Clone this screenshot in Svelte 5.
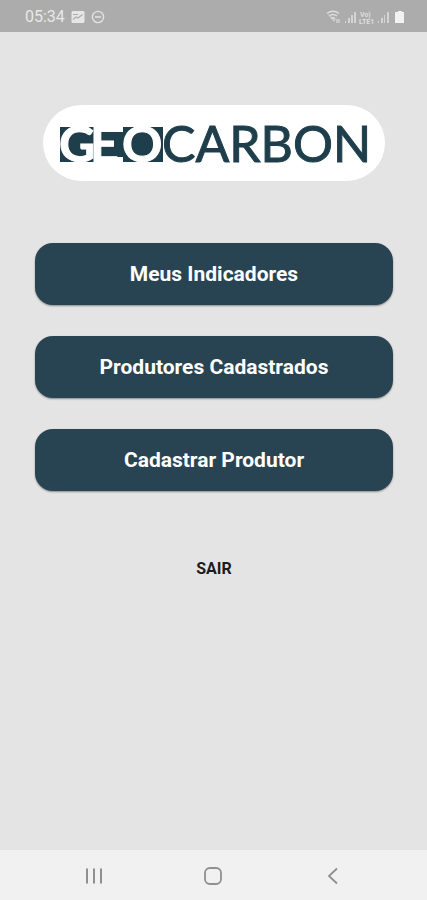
<script lang="ts">
	let time = '05:34';

	const actions = ['Meus Indicadores', 'Produtores Cadastrados', 'Cadastrar Produtor'];
</script>

<div class="screen">
	<header class="statusbar">
		<div class="status">
			<span class="time">{time}</span>
			<svg width="14" height="14" viewBox="0 0 14 14" aria-hidden="true">
				<rect x="0.5" y="1" width="13" height="12" rx="1.5" fill="#e6e6e6" />
				<path d="M2 9.5 L5 7 L7 8 L11.5 4.5" fill="none" stroke="#acacac" stroke-width="1.2" />
				<path d="M2 4.5h5" stroke="#acacac" stroke-width="1" />
			</svg>
			<svg width="14" height="14" viewBox="0 0 14 14" aria-hidden="true">
				<circle cx="7" cy="7" r="5.6" fill="none" stroke="#e2e2e2" stroke-width="1.4" />
				<path d="M4 7h6" stroke="#e2e2e2" stroke-width="1.6" />
			</svg>
		</div>
		<svg width="78" height="16" viewBox="0 0 78 16" aria-hidden="true">
			<g fill="none" stroke="#dedede" stroke-width="1.5">
				<path d="M1 4.5 Q7 0 13 4.5" />
				<path d="M3 7 Q7 4 11 7" />
				<path d="M5 9.5 Q7 8 9 9.5" />
			</g>
			<path d="M1 4 L8 13 L10 10 L7 9z" fill="#dedede" opacity="0.6" />
			<path d="M11 10v4M13 10v4" stroke="#e2e2e2" />
			<g fill="#d4d4d4">
				<rect x="19" y="12" width="1" height="2" />
				<rect x="22" y="9" width="2" height="5" />
				<rect x="25" y="6" width="2" height="8" />
				<rect x="28" y="3" width="2" height="11" />
				<rect x="52" y="12" width="1" height="2" />
				<rect x="55" y="9" width="2" height="5" />
				<rect x="58" y="6" width="1" height="8" />
				<rect x="61" y="3" width="2" height="11" />
			</g>
			<text x="34" y="8" class="volte">Vo)</text>
			<text x="33" y="15" class="volte">LTE1</text>
			<path d="M70 3h2V2h4v1h2v11h-9V3z" fill="#f2f2f2" />
		</svg>
	</header>

	<main>
		<div class="logo">
			<svg viewBox="0 0 342 76" role="img" aria-label="GeoCarbon">
				<g fill="#1f3e4b">
					<rect x="17" y="22" width="34" height="35" />
					<rect x="57" y="27" width="25" height="25" />
					<rect x="80" y="22" width="40" height="35" />
				</g>
				<text class="light" x="16 47 79" y="57">GEO</text>
				<text class="dark" x="119" y="57">CARBON</text>
			</svg>
		</div>

		<div class="actions">
			{#each actions as action}
				<button type="button" class="btn">{action}</button>
			{/each}
		</div>

		<button type="button" class="exit">SAIR</button>
	</main>

	<nav class="navbar">
		<button type="button" aria-label="Recentes">
			<svg width="20" height="20" viewBox="0 0 20 20">
				<path d="M3 2.5v15M10 2.5v15M17 2.5v15" stroke="#8f8f8f" stroke-width="2" />
			</svg>
		</button>
		<button type="button" aria-label="Início">
			<svg width="20" height="20" viewBox="0 0 20 20">
				<rect x="2" y="2" width="16" height="16" rx="5" fill="none" stroke="#8f8f8f" stroke-width="1.8" />
			</svg>
		</button>
		<button type="button" aria-label="Voltar">
			<svg width="20" height="20" viewBox="0 0 20 20">
				<path d="M14 2.5 L6 10 L14 17.5" fill="none" stroke="#8f8f8f" stroke-width="1.8" />
			</svg>
		</button>
	</nav>
</div>

<style>
	:global(body) {
		margin: 0;
		background-color: #e4e4e4;
	}

	.screen {
		display: flex;
		flex-direction: column;
		min-height: 100vh;
		font-family: Roboto, 'Liberation Sans', sans-serif;
		background-color: #e4e4e4;
	}

	.statusbar {
		display: flex;
		justify-content: space-between;
		align-items: center;
		box-sizing: border-box;
		height: 32px;
		padding: 2px 23px 0 25px;
		background-color: #acacac;
	}

	.status {
		display: flex;
		align-items: center;
		gap: 6px;
	}

	.time {
		width: 40px;
		font-size: 16px;
		line-height: 20px;
		color: #e8e8e8;
	}

	.volte {
		font-size: 7px;
		font-weight: 700;
		fill: #dedede;
	}

	main {
		flex: 1;
		display: flex;
		flex-direction: column;
		align-items: center;
		padding: 73px 34px 32px 35px;
	}

	.logo {
		align-self: stretch;
		margin: 0 8px;
		background-color: #ffffff;
		border-radius: 38px;
	}

	.logo svg {
		display: block;
		width: 100%;
	}

	.logo text {
		font-family: Lato, 'Open Sans', sans-serif;
		font-size: 50px;
		stroke-width: 1px;
	}

	.light {
		fill: #ffffff;
		stroke: #ffffff;
		font-weight: 700;
	}

	.dark {
		fill: #1f3e4b;
		stroke: #1f3e4b;
	}

	.actions {
		align-self: stretch;
		display: flex;
		flex-direction: column;
		gap: 31px;
		margin-top: 62px;
	}

	button {
		border: none;
		font-family: inherit;
		cursor: pointer;
	}

	.btn {
		padding: 19px 16px;
		border-radius: 18px;
		background-color: #284452;
		box-shadow: 0 1px 2px rgba(0, 0, 0, 0.4);
		color: #ffffff;
		font-size: 21px;
		font-weight: 700;
		line-height: 24px;
	}

	.exit {
		margin-top: 60px;
		padding: 8px 16px;
		background: none;
		color: #1c1c1c;
		font-size: 16px;
		font-weight: 700;
		line-height: 20px;
	}

	.navbar {
		display: flex;
		justify-content: space-around;
		align-items: center;
		box-sizing: border-box;
		height: 50px;
		padding: 2px 34px 0;
		background-color: #f1f1f1;
	}

	.navbar button {
		display: flex;
		padding: 8px;
		background: none;
	}
</style>
